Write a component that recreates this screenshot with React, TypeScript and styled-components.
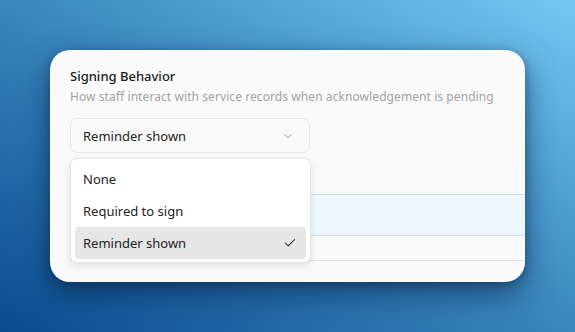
import React from "react";
import styled, { createGlobalStyle } from "styled-components";
import { ChevronDown, Check } from "lucide-react";

const Global = createGlobalStyle`
  html, body { margin: 0; padding: 0; }
  body {
    width: 575px;
    height: 332px;
    overflow: hidden;
    font-family: "Noto Sans", "Open Sans", sans-serif;
  }
`;

const Stage = styled.div`
  width: 575px;
  height: 332px;
  box-sizing: border-box;
  padding: 50px;
  background: linear-gradient(to top right, #0a4b8f 0%, #3a86bd 50%, #74c8f1 100%);
`;

const Card = styled.div`
  position: relative;
  width: 475px;
  height: 232px;
  box-sizing: border-box;
  background: #fafafa;
  border-radius: 20px;
  overflow: hidden;
  padding: 17px 0 0 20px;
  box-shadow: 0 12px 30px rgba(4, 28, 60, 0.55), 0 2px 8px rgba(4, 28, 60, 0.3);
  display: flex;
  flex-direction: column;
`;

const Title = styled.div`
  font-size: 13px;
  line-height: 18px;
  font-weight: 500;
  color: #1c1c1c;
`;

const Subtitle = styled.div`
  margin-top: 4px;
  font-size: 12px;
  letter-spacing: 0.08px;
  line-height: 16px;
  color: #a3a3a3;
  white-space: nowrap;
`;

const SelectWrap = styled.div`
  position: relative;
  margin-top: 13px;
  width: 240px;
`;

const Trigger = styled.div`
  height: 35px;
  box-sizing: border-box;
  border: 1px solid #e6e6e6;
  border-radius: 7px;
  background: #fafafa;
  display: flex;
  align-items: center;
  justify-content: space-between;
  padding: 0 14px 0 12px;
  font-size: 13px;
  color: #222;
`;

const Menu = styled.div`
  position: absolute;
  z-index: 2;
  top: 40px;
  left: 0;
  width: 241px;
  box-sizing: border-box;
  background: #ffffff;
  border: 1px solid #e5e5e5;
  border-radius: 7px;
  padding: 4px 4px 3px 4px;
  box-shadow: 0 3px 8px rgba(0, 0, 0, 0.1);
  display: flex;
  flex-direction: column;
`;

const Item = styled.div<{ $selected?: boolean }>`
  height: 32px;
  border-radius: 4px;
  display: flex;
  align-items: center;
  justify-content: space-between;
  padding: 0 9px 0 8px;
  font-size: 13px;
  color: #222;
  background: ${(p) => (p.$selected ? "#e6e6e6" : "transparent")};
`;

const Table = styled.div`
  margin-top: 41px;
  display: flex;
  flex-direction: column;
`;

const Row = styled.div<{ $active?: boolean }>`
  height: ${(p) => (p.$active ? "40px" : "24px")};
  background: ${(p) => (p.$active ? "#eef6ff" : "transparent")};
  border-top: ${(p) => (p.$active ? "1px solid #c6def6" : "none")};
  border-bottom: 1px solid ${(p) => (p.$active ? "#c6def6" : "#e4e4e4")};
`;

export default function App() {
  return (
    <>
      <Global />
      <Stage>
        <Card>
          <Title>Signing Behavior</Title>
          <Subtitle>How staff interact with service records when acknowledgement is pending</Subtitle>
          <SelectWrap>
            <Trigger>
              <span>Reminder shown</span>
              <ChevronDown size={14} color="#8a8a8a" strokeWidth={1.6} />
            </Trigger>
            <Menu>
              <Item>None</Item>
              <Item>Required to sign</Item>
              <Item $selected>
                <span>Reminder shown</span>
                <Check size={14} color="#222" strokeWidth={1.8} />
              </Item>
            </Menu>
          </SelectWrap>
          <Table>
            <Row $active />
            <Row />
          </Table>
        </Card>
      </Stage>
    </>
  );
}
